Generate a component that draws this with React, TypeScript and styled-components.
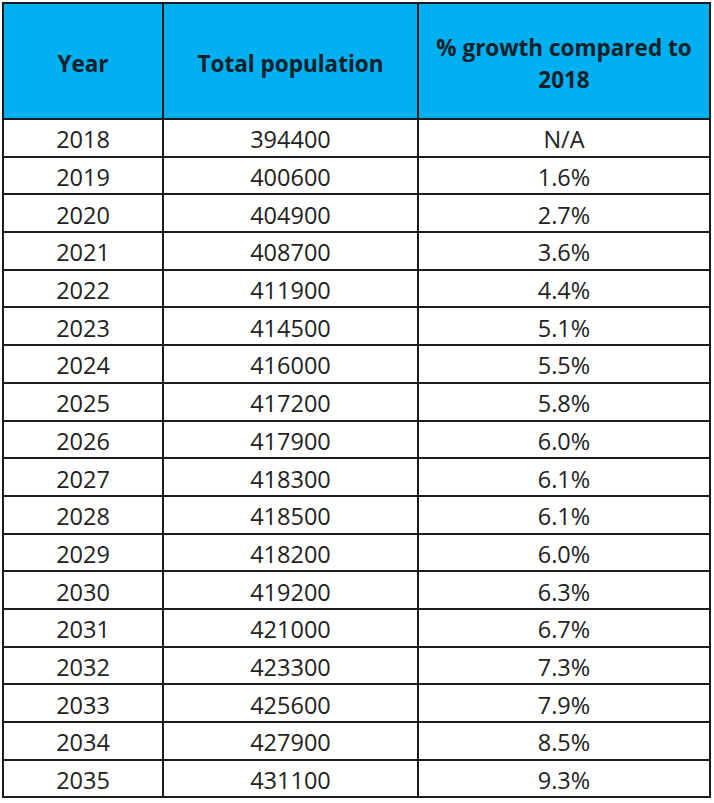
import React from 'react';
import styled, { createGlobalStyle } from 'styled-components';

const GlobalStyle = createGlobalStyle`
  html, body {
    margin: 0;
    padding: 0;
    background: #ffffff;
  }
`;

const Page = styled.div`
  padding: 2px 5px 0 2px;
  font-family: 'Open Sans', 'Noto Sans', sans-serif;
`;

const Table = styled.table`
  width: 707px;
  border-collapse: collapse;
  table-layout: fixed;
  color: #222;
`;

const Col = styled.col<{ $w: number }>`
  width: ${(p) => p.$w}px;
`;

const HeadCell = styled.th`
  box-sizing: border-box;
  height: 116px;
  padding: 6px 10px 0;
  background: #00b0f0;
  border: 2px solid #1c1c1c;
  font-size: 22.5px;
  font-weight: 700;
  line-height: 32px;
  color: #10202a;
  text-align: center;
  vertical-align: middle;
`;

const Cell = styled.td`
  box-sizing: border-box;
  height: 37.7px;
  padding: 4px 0 0;
  border: 2px solid #1c1c1c;
  font-size: 23.5px;
  line-height: 31px;
  text-align: center;
  vertical-align: middle;
`;

const rows: [string, string, string][] = [
  ['2018', '394400', 'N/A'],
  ['2019', '400600', '1.6%'],
  ['2020', '404900', '2.7%'],
  ['2021', '408700', '3.6%'],
  ['2022', '411900', '4.4%'],
  ['2023', '414500', '5.1%'],
  ['2024', '416000', '5.5%'],
  ['2025', '417200', '5.8%'],
  ['2026', '417900', '6.0%'],
  ['2027', '418300', '6.1%'],
  ['2028', '418500', '6.1%'],
  ['2029', '418200', '6.0%'],
  ['2030', '419200', '6.3%'],
  ['2031', '421000', '6.7%'],
  ['2032', '423300', '7.3%'],
  ['2033', '425600', '7.9%'],
  ['2034', '427900', '8.5%'],
  ['2035', '431100', '9.3%'],
];

export default function App() {
  return (
    <Page>
      <GlobalStyle />
      <Table>
        <colgroup>
          <Col $w={160} />
          <Col $w={255} />
          <Col $w={292} />
        </colgroup>
        <thead>
          <tr>
            <HeadCell>Year</HeadCell>
            <HeadCell>Total population</HeadCell>
            <HeadCell>% growth compared to 2018</HeadCell>
          </tr>
        </thead>
        <tbody>
          {rows.map(([year, total, growth]) => (
            <tr key={year}>
              <Cell>{year}</Cell>
              <Cell>{total}</Cell>
              <Cell>{growth}</Cell>
            </tr>
          ))}
        </tbody>
      </Table>
    </Page>
  );
}
